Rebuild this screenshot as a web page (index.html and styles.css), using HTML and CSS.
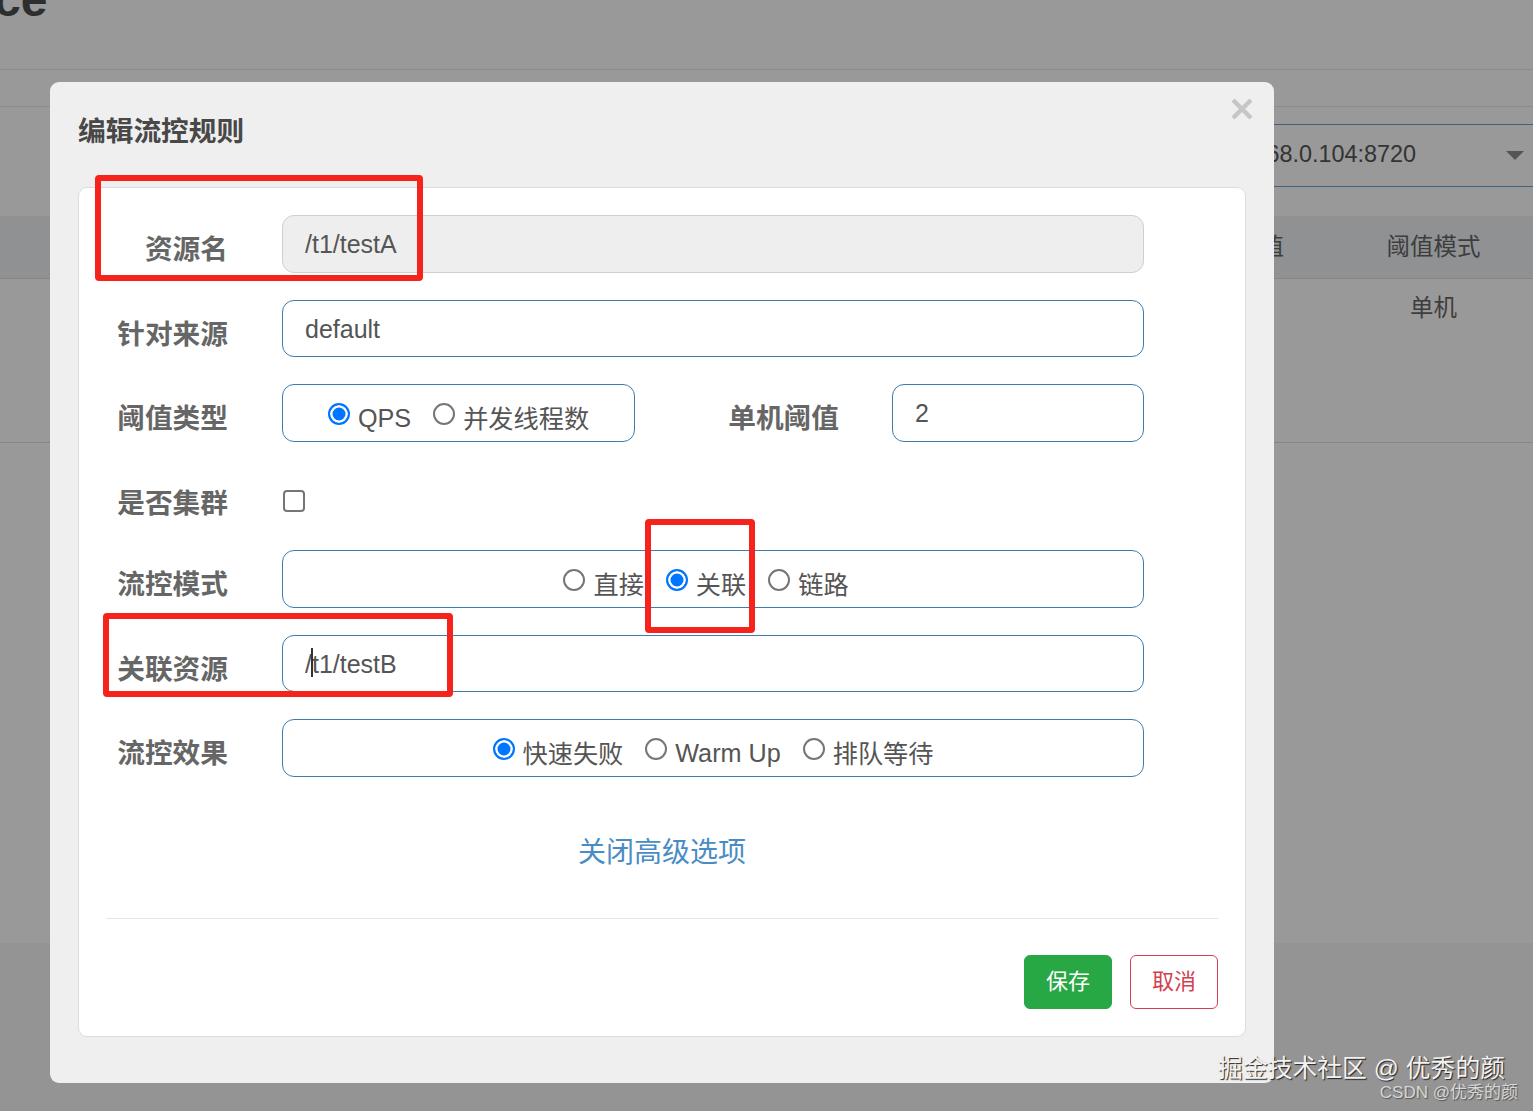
FILE: index.html
```html
<!DOCTYPE html>
<html lang="en">
<head>
    <meta charset="UTF-8">
    <meta name="viewport" content="width=device-width, initial-scale=1.0">
    <title>编辑流控规则</title>
    <link rel="stylesheet" href="styles.css">
</head>
<body>

    <!-- Dimmed page behind the dialog -->
    <div class="page">
        <div class="page-title"><h1>ce</h1></div>
        <div class="page-nav"></div>
        <div class="machine-bar">
            <span class="machine-name">192.168.0.104:8720</span>
            <span class="machine-arrow"></span>
        </div>
        <div class="table-head">
            <div class="table-cell">阈值</div>
            <div class="table-cell">阈值模式</div>
        </div>
        <div class="table-row">
            <div class="table-cell"></div>
            <div class="table-cell">单机</div>
        </div>
        <div class="page-rest"></div>
        <div class="page-bottom"></div>
    </div>

    <!-- Edit dialog -->
    <div class="modal">
        <div class="modal-header">
            <h2>编辑流控规则</h2>
            <svg class="modal-close" viewBox="0 0 22 22" width="22" height="22">
                <path d="M2 2 L20 20 M20 2 L2 20" stroke="#c6c6c6" stroke-width="4.5" fill="none"/>
            </svg>
        </div>

        <div class="panel">
            <form class="rule-form">
                <div class="form-row">
                    <label class="form-label">资源名</label>
                    <input class="form-input" type="text" value="/t1/testA" disabled>
                </div>

                <div class="form-row">
                    <label class="form-label">针对来源</label>
                    <input class="form-input" type="text" value="default">
                </div>

                <div class="form-row">
                    <label class="form-label">阈值类型</label>
                    <div class="radio-box radio-box-small">
                        <label class="radio radio-latin"><input type="radio" name="grade" checked>QPS</label>
                        <label class="radio"><input type="radio" name="grade">并发线程数</label>
                    </div>
                    <label class="form-label form-label-inner">单机阈值</label>
                    <input class="form-input form-input-small" type="text" value="2">
                </div>

                <div class="form-row form-row-check">
                    <label class="form-label">是否集群</label>
                    <input class="form-check" type="checkbox">
                </div>

                <div class="form-row">
                    <label class="form-label">流控模式</label>
                    <div class="radio-box radio-box-shift">
                        <label class="radio"><input type="radio" name="mode">直接</label>
                        <label class="radio"><input type="radio" name="mode" checked>关联</label>
                        <label class="radio"><input type="radio" name="mode">链路</label>
                    </div>
                </div>

                <div class="form-row">
                    <label class="form-label">关联资源</label>
                    <div class="input-wrap">
                        <input class="form-input" type="text" value="/t1/testB">
                        <span class="caret"></span>
                    </div>
                </div>

                <div class="form-row">
                    <label class="form-label">流控效果</label>
                    <div class="radio-box">
                        <label class="radio"><input type="radio" name="effect" checked>快速失败</label>
                        <label class="radio radio-latin"><input type="radio" name="effect">Warm Up</label>
                        <label class="radio"><input type="radio" name="effect">排队等待</label>
                    </div>
                </div>

                <div class="advanced"><a href="#">关闭高级选项</a></div>
            </form>

            <div class="panel-footer">
                <button class="btn btn-save" type="button">保存</button>
                <button class="btn btn-cancel" type="button">取消</button>
            </div>
        </div>
    </div>

    <!-- Red boxes drawn on top of the screenshot -->
    <div class="mark mark-name"></div>
    <div class="mark mark-mode"></div>
    <div class="mark mark-ref"></div>

    <!-- Watermarks -->
    <div class="watermark">掘金技术社区 @ 优秀的颜</div>
    <div class="watermark-small">CSDN @优秀的颜</div>

</body>
</html>
```

FILE: styles.css
```css
/* General body styling */
body {
    font-family: 'Liberation Sans', 'Noto Sans CJK SC', sans-serif;
    margin: 0;
    padding: 0;
    height: 1111px;
    overflow: hidden;
    position: relative;
    background-color: #999;
    color: #555;
}

/* Page behind the dialog */
.page-title {
    height: 69px;
    border-bottom: 1px solid #8c8c8c;
    overflow: hidden;
}

.page-title h1 {
    margin: -24px 0 0 -6px;
    font-size: 48px;
    line-height: 48px;
    font-weight: bold;
    color: #2e2e2e;
}

.page-nav {
    height: 36px;
    border-bottom: 1px solid #8c8c8c;
}

.machine-bar {
    display: flex;
    align-items: center;
    height: 61px;
    margin: 17px 0 0 1100px;
    border-top: 1px solid #3f607e;
    border-bottom: 1px solid #3f607e;
}

.machine-name {
    width: 316px;
    padding-bottom: 2px;
    text-align: right;
    font-size: 23.4px;
    white-space: nowrap;
    color: #333;
}

.machine-arrow {
    margin-left: 90px;
    border-left: 9px solid transparent;
    border-right: 9px solid transparent;
    border-top: 9px solid #555;
}

.table-head,
.table-row {
    display: flex;
    justify-content: flex-end;
    padding-right: 13px;
    font-size: 23.5px;
    color: #3d3d3d;
}

.table-head {
    height: 58px;
    margin-top: 29px;
    padding-bottom: 4px;
    align-items: center;
    background-color: #8f9193;
    border-bottom: 1px solid #858585;
}

.table-row {
    height: 163px;
    border-bottom: 1px solid #868686;
}

.table-cell {
    width: 173px;
    text-align: center;
}

.table-row .table-cell {
    padding-top: 10px;
}

.page-rest {
    height: 500px;
}

.page-bottom {
    height: 168px;
    background-color: #949494;
}

/* Dialog */
.modal {
    position: absolute;
    left: 50px;
    top: 82px;
    width: 1224px;
    height: 1001px;
    box-sizing: border-box;
    padding: 0 28px;
    background-color: #efefef;
    border-radius: 9px;
}

.modal-header {
    display: flex;
    justify-content: space-between;
    height: 105px;
}

.modal-header h2 {
    margin: 32px 0 0 0;
    font-size: 27.7px;
    line-height: 36px;
    font-weight: bold;
    color: #484848;
}

.modal-close {
    margin: 16px -7px 0 0;
}

.panel {
    height: 850px;
    box-sizing: border-box;
    padding: 27px 27px 0 27px;
    background-color: white;
    border: 1px solid #dcdcdc;
    border-radius: 9px;
}

/* Form rows */
.form-row {
    display: flex;
    align-items: center;
    width: 1038px;
    height: 57.5px;
    margin-bottom: 27px;
}

.form-row-check {
    height: 54px;
    margin-bottom: 27.5px;
}

.form-row-check .form-label {
    padding-top: 11px;
}

.form-label {
    flex: 0 0 122px;
    margin-right: 54px;
    padding-top: 7px;
    text-align: right;
    font-size: 27.7px;
    font-weight: bold;
    color: #666;
}

.form-label-inner {
    flex: 0 0 112px;
    margin-left: 92px;
    margin-right: 53px;
}

.form-input {
    flex: 1;
    width: 100%;
    height: 57.5px;
    box-sizing: border-box;
    padding: 2px 22px 0 22px;
    border: 1px solid #3f7bab;
    border-radius: 12px;
    background-color: white;
    font-family: inherit;
    font-size: 25px;
    color: #555;
}

.form-input:disabled {
    border-color: #cfcfcf;
    background-color: #eee;
    color: #555;
}

.form-input-small {
    flex: 0 0 252px;
    width: 252px;
}

.input-wrap {
    flex: 1;
    position: relative;
}

.input-wrap .form-input {
    display: block;
}

.caret {
    position: absolute;
    left: 29px;
    top: 13px;
    width: 2px;
    height: 29px;
    background-color: #333;
}

.form-check {
    appearance: none;
    width: 22px;
    height: 22px;
    margin: 10px 0 0 1px;
    box-sizing: border-box;
    border: 2px solid #767676;
    border-radius: 4px;
    background-color: white;
}

/* Radio groups */
.radio-box {
    flex: 1;
    display: flex;
    justify-content: center;
    align-items: center;
    gap: 22px;
    height: 57.5px;
    box-sizing: border-box;
    padding-top: 2px;
    border: 1px solid #3f7bab;
    border-radius: 12px;
}

.radio-box-small {
    flex: 0 0 353px;
}

.radio-box-shift {
    padding-right: 14px;
}

.radio {
    display: flex;
    align-items: center;
    gap: 8px;
    padding-top: 6px;
    font-size: 25.2px;
    color: #555;
}

.radio input {
    appearance: none;
    width: 22px;
    height: 22px;
    margin: -5px 0 0 0;
    box-sizing: border-box;
    border: 2px solid #767676;
    border-radius: 50%;
    background-color: white;
}

.radio input:checked {
    border-color: #0075ff;
    background-color: #0075ff;
    box-shadow: inset 0 0 0 2.5px white;
}

/* Latin text sits a little lower than the CJK labels */
.radio-latin {
    padding-top: 10px;
}

.radio-latin input {
    margin-top: -9px;
}

/* Advanced link */
.advanced {
    padding-top: 27px;
    width: 1168px;
    margin-left: -28px;
    text-align: center;
    font-size: 28px;
    line-height: 44px;
}

.advanced a {
    color: #4a8cc4;
    text-decoration: none;
}

/* Footer with buttons */
.panel-footer {
    display: flex;
    justify-content: flex-end;
    gap: 18px;
    margin-top: 43px;
    padding-top: 36px;
    border-top: 1px solid #e5e5e5;
}

.btn {
    width: 88px;
    height: 54px;
    padding: 0 0 5px 0;
    border-radius: 6px;
    font-family: inherit;
    font-size: 22px;
}

.btn-save {
    background-color: #28a745;
    border: 1px solid #28a745;
    color: white;
}

.btn-cancel {
    background-color: white;
    border: 1px solid #d33f52;
    color: #d33f52;
}

/* Red annotation boxes */
.mark {
    position: absolute;
    box-sizing: border-box;
    border: 6px solid #f5231b;
    border-radius: 4px;
}

.mark-name {
    left: 95px;
    top: 175px;
    width: 328px;
    height: 106px;
}

.mark-mode {
    left: 645px;
    top: 519px;
    width: 110px;
    height: 114px;
}

.mark-ref {
    left: 103px;
    top: 613px;
    width: 350px;
    height: 84px;
}

/* Watermarks */
.watermark {
    position: absolute;
    right: 28px;
    top: 1053px;
    font-size: 24.8px;
    line-height: 32px;
    white-space: nowrap;
    color: #f2f2f2;
    text-shadow: 1px 1px 1px #222;
}

.watermark-small {
    position: absolute;
    right: 15px;
    top: 1081px;
    font-size: 17px;
    line-height: 24px;
    white-space: nowrap;
    color: #d6d6d6;
    text-shadow: 1px 1px 1px #555;
}
```
